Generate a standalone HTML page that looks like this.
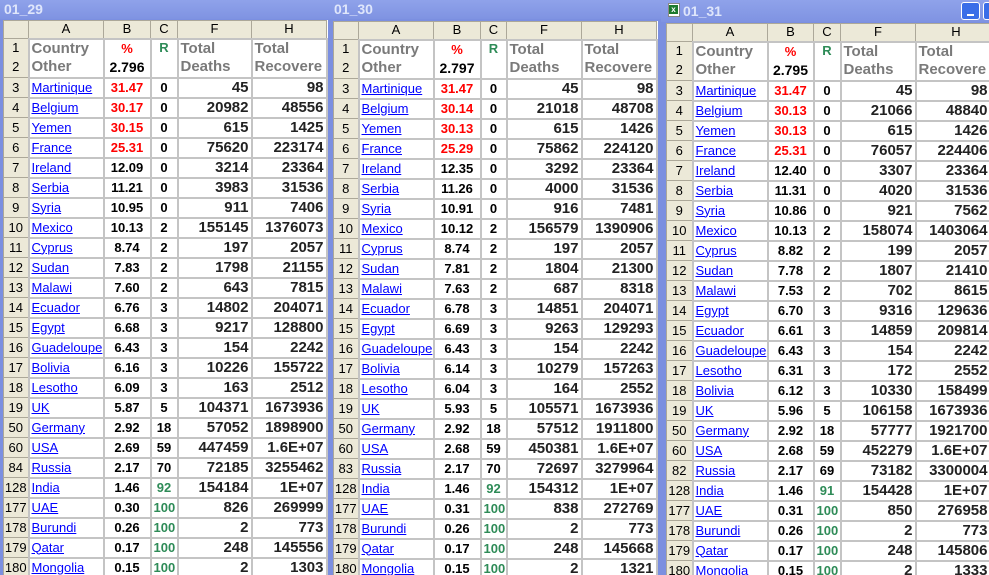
<!DOCTYPE html>
<html><head><meta charset="utf-8"><style>
*{margin:0;padding:0;box-sizing:border-box}
body{width:989px;height:575px;overflow:hidden;background:#7b8fe0;font-family:"Liberation Sans",Arial,sans-serif;position:relative}
.win{position:absolute;top:0;height:575px;background:#7b8fe0;overflow:hidden}
.tb{position:absolute;left:0;right:0;top:0;background:linear-gradient(#8fa2ea,#7f93e2);color:#dfe6fb;font-weight:bold;font-size:14px;padding-left:4px;}
table{position:absolute;border-collapse:collapse;table-layout:fixed;background:#fff}
td{border:2px solid #c4c4c4;height:20px;white-space:nowrap;overflow:hidden;font-size:13px;line-height:16px;padding:0 2px}
tr.h td{background:#ece9d8;border:1px solid #aca899;height:18px;text-align:center;font-size:13px;font-weight:normal;color:#000}
td.n{background:#ece9d8;border:1px solid #aca899;text-align:center;font-size:13px;padding:0}
td.a{color:#00f;text-decoration:underline;font-size:13px}
td.b{font-weight:bold;text-align:center;font-size:13px}
td.r{color:#f00}
td.c{font-weight:bold;text-align:center;font-size:13px}
td.g{color:#2e8b57}
td.f{font-weight:bold;text-align:right;font-size:15px;color:#222}
tr.t1 td{border-bottom:none;height:19px}
tr.t2 td{border-top:none}
td.hd{color:#7a7a7a;font-weight:bold;font-size:15px}
</style></head><body>

<div class="win" style="left:0;width:331px">
<div class="tb" style="height:19px;line-height:19px">01_29</div>
<table style="left:3px;top:20px;width:323px">
<colgroup><col style="width:25px"><col style="width:75px"><col style="width:47px"><col style="width:27px"><col style="width:74px"><col style="width:75px"></colgroup>
<tr class="h"><td>&nbsp;</td><td>A</td><td>B</td><td>C</td><td>F</td><td>H</td></tr>
<tr class="t1"><td class="n">1</td><td class="hd">Country</td><td class="b r">%</td><td class="c g" rowspan="2" style="vertical-align:top;border-bottom:2px solid #c4c4c4">R</td><td class="hd">Total</td><td class="hd">Total</td></tr>
<tr class="t2"><td class="n">2</td><td class="hd">Other</td><td class="b" style="font-size:14px">2.796</td><td class="hd">Deaths</td><td class="hd">Recovere</td></tr>
<tr><td class="n">3</td><td class="a">Martinique</td><td class="b r">31.47</td><td class="c">0</td><td class="f">45</td><td class="f">98</td></tr>
<tr><td class="n">4</td><td class="a">Belgium</td><td class="b r">30.17</td><td class="c">0</td><td class="f">20982</td><td class="f">48556</td></tr>
<tr><td class="n">5</td><td class="a">Yemen</td><td class="b r">30.15</td><td class="c">0</td><td class="f">615</td><td class="f">1425</td></tr>
<tr><td class="n">6</td><td class="a">France</td><td class="b r">25.31</td><td class="c">0</td><td class="f">75620</td><td class="f">223174</td></tr>
<tr><td class="n">7</td><td class="a">Ireland</td><td class="b">12.09</td><td class="c">0</td><td class="f">3214</td><td class="f">23364</td></tr>
<tr><td class="n">8</td><td class="a">Serbia</td><td class="b">11.21</td><td class="c">0</td><td class="f">3983</td><td class="f">31536</td></tr>
<tr><td class="n">9</td><td class="a">Syria</td><td class="b">10.95</td><td class="c">0</td><td class="f">911</td><td class="f">7406</td></tr>
<tr><td class="n">10</td><td class="a">Mexico</td><td class="b">10.13</td><td class="c">2</td><td class="f">155145</td><td class="f">1376073</td></tr>
<tr><td class="n">11</td><td class="a">Cyprus</td><td class="b">8.74</td><td class="c">2</td><td class="f">197</td><td class="f">2057</td></tr>
<tr><td class="n">12</td><td class="a">Sudan</td><td class="b">7.83</td><td class="c">2</td><td class="f">1798</td><td class="f">21155</td></tr>
<tr><td class="n">13</td><td class="a">Malawi</td><td class="b">7.60</td><td class="c">2</td><td class="f">643</td><td class="f">7815</td></tr>
<tr><td class="n">14</td><td class="a">Ecuador</td><td class="b">6.76</td><td class="c">3</td><td class="f">14802</td><td class="f">204071</td></tr>
<tr><td class="n">15</td><td class="a">Egypt</td><td class="b">6.68</td><td class="c">3</td><td class="f">9217</td><td class="f">128800</td></tr>
<tr><td class="n">16</td><td class="a">Guadeloupe</td><td class="b">6.43</td><td class="c">3</td><td class="f">154</td><td class="f">2242</td></tr>
<tr><td class="n">17</td><td class="a">Bolivia</td><td class="b">6.16</td><td class="c">3</td><td class="f">10226</td><td class="f">155722</td></tr>
<tr><td class="n">18</td><td class="a">Lesotho</td><td class="b">6.09</td><td class="c">3</td><td class="f">163</td><td class="f">2512</td></tr>
<tr><td class="n">19</td><td class="a">UK</td><td class="b">5.87</td><td class="c">5</td><td class="f">104371</td><td class="f">1673936</td></tr>
<tr><td class="n">50</td><td class="a">Germany</td><td class="b">2.92</td><td class="c">18</td><td class="f">57052</td><td class="f">1898900</td></tr>
<tr><td class="n">60</td><td class="a">USA</td><td class="b">2.69</td><td class="c">59</td><td class="f">447459</td><td class="f">1.6E+07</td></tr>
<tr><td class="n">84</td><td class="a">Russia</td><td class="b">2.17</td><td class="c">70</td><td class="f">72185</td><td class="f">3255462</td></tr>
<tr><td class="n">128</td><td class="a">India</td><td class="b">1.46</td><td class="c g">92</td><td class="f">154184</td><td class="f">1E+07</td></tr>
<tr><td class="n">177</td><td class="a">UAE</td><td class="b">0.30</td><td class="c g">100</td><td class="f">826</td><td class="f">269999</td></tr>
<tr><td class="n">178</td><td class="a">Burundi</td><td class="b">0.26</td><td class="c g">100</td><td class="f">2</td><td class="f">773</td></tr>
<tr><td class="n">179</td><td class="a">Qatar</td><td class="b">0.17</td><td class="c g">100</td><td class="f">248</td><td class="f">145556</td></tr>
<tr><td class="n">180</td><td class="a">Mongolia</td><td class="b">0.15</td><td class="c g">100</td><td class="f">2</td><td class="f">1303</td></tr>
</table>
</div>

<div class="win" style="left:330px;width:331px">
<div class="tb" style="height:19px;line-height:19px">01_30</div>
<table style="left:3px;top:21px;width:323px">
<colgroup><col style="width:25px"><col style="width:75px"><col style="width:47px"><col style="width:26px"><col style="width:75px"><col style="width:75px"></colgroup>
<tr class="h"><td>&nbsp;</td><td>A</td><td>B</td><td>C</td><td>F</td><td>H</td></tr>
<tr class="t1"><td class="n">1</td><td class="hd">Country</td><td class="b r">%</td><td class="c g" rowspan="2" style="vertical-align:top;border-bottom:2px solid #c4c4c4">R</td><td class="hd">Total</td><td class="hd">Total</td></tr>
<tr class="t2"><td class="n">2</td><td class="hd">Other</td><td class="b" style="font-size:14px">2.797</td><td class="hd">Deaths</td><td class="hd">Recovere</td></tr>
<tr><td class="n">3</td><td class="a">Martinique</td><td class="b r">31.47</td><td class="c">0</td><td class="f">45</td><td class="f">98</td></tr>
<tr><td class="n">4</td><td class="a">Belgium</td><td class="b r">30.14</td><td class="c">0</td><td class="f">21018</td><td class="f">48708</td></tr>
<tr><td class="n">5</td><td class="a">Yemen</td><td class="b r">30.13</td><td class="c">0</td><td class="f">615</td><td class="f">1426</td></tr>
<tr><td class="n">6</td><td class="a">France</td><td class="b r">25.29</td><td class="c">0</td><td class="f">75862</td><td class="f">224120</td></tr>
<tr><td class="n">7</td><td class="a">Ireland</td><td class="b">12.35</td><td class="c">0</td><td class="f">3292</td><td class="f">23364</td></tr>
<tr><td class="n">8</td><td class="a">Serbia</td><td class="b">11.26</td><td class="c">0</td><td class="f">4000</td><td class="f">31536</td></tr>
<tr><td class="n">9</td><td class="a">Syria</td><td class="b">10.91</td><td class="c">0</td><td class="f">916</td><td class="f">7481</td></tr>
<tr><td class="n">10</td><td class="a">Mexico</td><td class="b">10.12</td><td class="c">2</td><td class="f">156579</td><td class="f">1390906</td></tr>
<tr><td class="n">11</td><td class="a">Cyprus</td><td class="b">8.74</td><td class="c">2</td><td class="f">197</td><td class="f">2057</td></tr>
<tr><td class="n">12</td><td class="a">Sudan</td><td class="b">7.81</td><td class="c">2</td><td class="f">1804</td><td class="f">21300</td></tr>
<tr><td class="n">13</td><td class="a">Malawi</td><td class="b">7.63</td><td class="c">2</td><td class="f">687</td><td class="f">8318</td></tr>
<tr><td class="n">14</td><td class="a">Ecuador</td><td class="b">6.78</td><td class="c">3</td><td class="f">14851</td><td class="f">204071</td></tr>
<tr><td class="n">15</td><td class="a">Egypt</td><td class="b">6.69</td><td class="c">3</td><td class="f">9263</td><td class="f">129293</td></tr>
<tr><td class="n">16</td><td class="a">Guadeloupe</td><td class="b">6.43</td><td class="c">3</td><td class="f">154</td><td class="f">2242</td></tr>
<tr><td class="n">17</td><td class="a">Bolivia</td><td class="b">6.14</td><td class="c">3</td><td class="f">10279</td><td class="f">157263</td></tr>
<tr><td class="n">18</td><td class="a">Lesotho</td><td class="b">6.04</td><td class="c">3</td><td class="f">164</td><td class="f">2552</td></tr>
<tr><td class="n">19</td><td class="a">UK</td><td class="b">5.93</td><td class="c">5</td><td class="f">105571</td><td class="f">1673936</td></tr>
<tr><td class="n">50</td><td class="a">Germany</td><td class="b">2.92</td><td class="c">18</td><td class="f">57512</td><td class="f">1911800</td></tr>
<tr><td class="n">60</td><td class="a">USA</td><td class="b">2.68</td><td class="c">59</td><td class="f">450381</td><td class="f">1.6E+07</td></tr>
<tr><td class="n">83</td><td class="a">Russia</td><td class="b">2.17</td><td class="c">70</td><td class="f">72697</td><td class="f">3279964</td></tr>
<tr><td class="n">128</td><td class="a">India</td><td class="b">1.46</td><td class="c g">92</td><td class="f">154312</td><td class="f">1E+07</td></tr>
<tr><td class="n">177</td><td class="a">UAE</td><td class="b">0.31</td><td class="c g">100</td><td class="f">838</td><td class="f">272769</td></tr>
<tr><td class="n">178</td><td class="a">Burundi</td><td class="b">0.26</td><td class="c g">100</td><td class="f">2</td><td class="f">773</td></tr>
<tr><td class="n">179</td><td class="a">Qatar</td><td class="b">0.17</td><td class="c g">100</td><td class="f">248</td><td class="f">145668</td></tr>
<tr><td class="n">180</td><td class="a">Mongolia</td><td class="b">0.15</td><td class="c g">100</td><td class="f">2</td><td class="f">1321</td></tr>
</table>
</div>

<div class="win" style="left:661px;width:328px">
<div class="tb" style="height:22px;line-height:22px;padding-left:22px">01_31
<div style="position:absolute;left:7px;top:3px;width:12px;height:14px;background:#fff;border:1px solid #888"><div style="width:9px;height:9px;background:#1d7a2e;color:#fff;font-size:8px;line-height:9px;text-align:center;margin-top:1px">x</div></div>
<div style="position:absolute;left:300px;top:2px;width:19px;height:18px;background:#3a6ee8;border:1px solid #fff;border-radius:3px"><div style="position:absolute;left:5px;top:11px;width:7px;height:2px;background:#fff"></div></div>
<div style="position:absolute;left:322px;top:2px;width:19px;height:18px;background:#3a6ee8;border:1px solid #fff;border-radius:3px"></div>
</div>
<table style="left:5px;top:23px;width:330px">
<colgroup><col style="width:26px"><col style="width:75px"><col style="width:46px"><col style="width:27px"><col style="width:75px"><col style="width:81px"></colgroup>
<tr class="h"><td>&nbsp;</td><td>A</td><td>B</td><td>C</td><td>F</td><td>H</td></tr>
<tr class="t1"><td class="n">1</td><td class="hd">Country</td><td class="b r">%</td><td class="c g" rowspan="2" style="vertical-align:top;border-bottom:2px solid #c4c4c4">R</td><td class="hd">Total</td><td class="hd">Total</td></tr>
<tr class="t2"><td class="n">2</td><td class="hd">Other</td><td class="b" style="font-size:14px">2.795</td><td class="hd">Deaths</td><td class="hd">Recovere</td></tr>
<tr><td class="n">3</td><td class="a">Martinique</td><td class="b r">31.47</td><td class="c">0</td><td class="f">45</td><td class="f" style="padding-right:8px">98</td></tr>
<tr><td class="n">4</td><td class="a">Belgium</td><td class="b r">30.13</td><td class="c">0</td><td class="f">21066</td><td class="f" style="padding-right:8px">48840</td></tr>
<tr><td class="n">5</td><td class="a">Yemen</td><td class="b r">30.13</td><td class="c">0</td><td class="f">615</td><td class="f" style="padding-right:8px">1426</td></tr>
<tr><td class="n">6</td><td class="a">France</td><td class="b r">25.31</td><td class="c">0</td><td class="f">76057</td><td class="f" style="padding-right:8px">224406</td></tr>
<tr><td class="n">7</td><td class="a">Ireland</td><td class="b">12.40</td><td class="c">0</td><td class="f">3307</td><td class="f" style="padding-right:8px">23364</td></tr>
<tr><td class="n">8</td><td class="a">Serbia</td><td class="b">11.31</td><td class="c">0</td><td class="f">4020</td><td class="f" style="padding-right:8px">31536</td></tr>
<tr><td class="n">9</td><td class="a">Syria</td><td class="b">10.86</td><td class="c">0</td><td class="f">921</td><td class="f" style="padding-right:8px">7562</td></tr>
<tr><td class="n">10</td><td class="a">Mexico</td><td class="b">10.13</td><td class="c">2</td><td class="f">158074</td><td class="f" style="padding-right:8px">1403064</td></tr>
<tr><td class="n">11</td><td class="a">Cyprus</td><td class="b">8.82</td><td class="c">2</td><td class="f">199</td><td class="f" style="padding-right:8px">2057</td></tr>
<tr><td class="n">12</td><td class="a">Sudan</td><td class="b">7.78</td><td class="c">2</td><td class="f">1807</td><td class="f" style="padding-right:8px">21410</td></tr>
<tr><td class="n">13</td><td class="a">Malawi</td><td class="b">7.53</td><td class="c">2</td><td class="f">702</td><td class="f" style="padding-right:8px">8615</td></tr>
<tr><td class="n">14</td><td class="a">Egypt</td><td class="b">6.70</td><td class="c">3</td><td class="f">9316</td><td class="f" style="padding-right:8px">129636</td></tr>
<tr><td class="n">15</td><td class="a">Ecuador</td><td class="b">6.61</td><td class="c">3</td><td class="f">14859</td><td class="f" style="padding-right:8px">209814</td></tr>
<tr><td class="n">16</td><td class="a">Guadeloupe</td><td class="b">6.43</td><td class="c">3</td><td class="f">154</td><td class="f" style="padding-right:8px">2242</td></tr>
<tr><td class="n">17</td><td class="a">Lesotho</td><td class="b">6.31</td><td class="c">3</td><td class="f">172</td><td class="f" style="padding-right:8px">2552</td></tr>
<tr><td class="n">18</td><td class="a">Bolivia</td><td class="b">6.12</td><td class="c">3</td><td class="f">10330</td><td class="f" style="padding-right:8px">158499</td></tr>
<tr><td class="n">19</td><td class="a">UK</td><td class="b">5.96</td><td class="c">5</td><td class="f">106158</td><td class="f" style="padding-right:8px">1673936</td></tr>
<tr><td class="n">50</td><td class="a">Germany</td><td class="b">2.92</td><td class="c">18</td><td class="f">57777</td><td class="f" style="padding-right:8px">1921700</td></tr>
<tr><td class="n">60</td><td class="a">USA</td><td class="b">2.68</td><td class="c">59</td><td class="f">452279</td><td class="f" style="padding-right:8px">1.6E+07</td></tr>
<tr><td class="n">82</td><td class="a">Russia</td><td class="b">2.17</td><td class="c">69</td><td class="f">73182</td><td class="f" style="padding-right:8px">3300004</td></tr>
<tr><td class="n">128</td><td class="a">India</td><td class="b">1.46</td><td class="c g">91</td><td class="f">154428</td><td class="f" style="padding-right:8px">1E+07</td></tr>
<tr><td class="n">177</td><td class="a">UAE</td><td class="b">0.31</td><td class="c g">100</td><td class="f">850</td><td class="f" style="padding-right:8px">276958</td></tr>
<tr><td class="n">178</td><td class="a">Burundi</td><td class="b">0.26</td><td class="c g">100</td><td class="f">2</td><td class="f" style="padding-right:8px">773</td></tr>
<tr><td class="n">179</td><td class="a">Qatar</td><td class="b">0.17</td><td class="c g">100</td><td class="f">248</td><td class="f" style="padding-right:8px">145806</td></tr>
<tr><td class="n">180</td><td class="a">Mongolia</td><td class="b">0.15</td><td class="c g">100</td><td class="f">2</td><td class="f" style="padding-right:8px">1333</td></tr>
</table>
</div>
</body></html>
